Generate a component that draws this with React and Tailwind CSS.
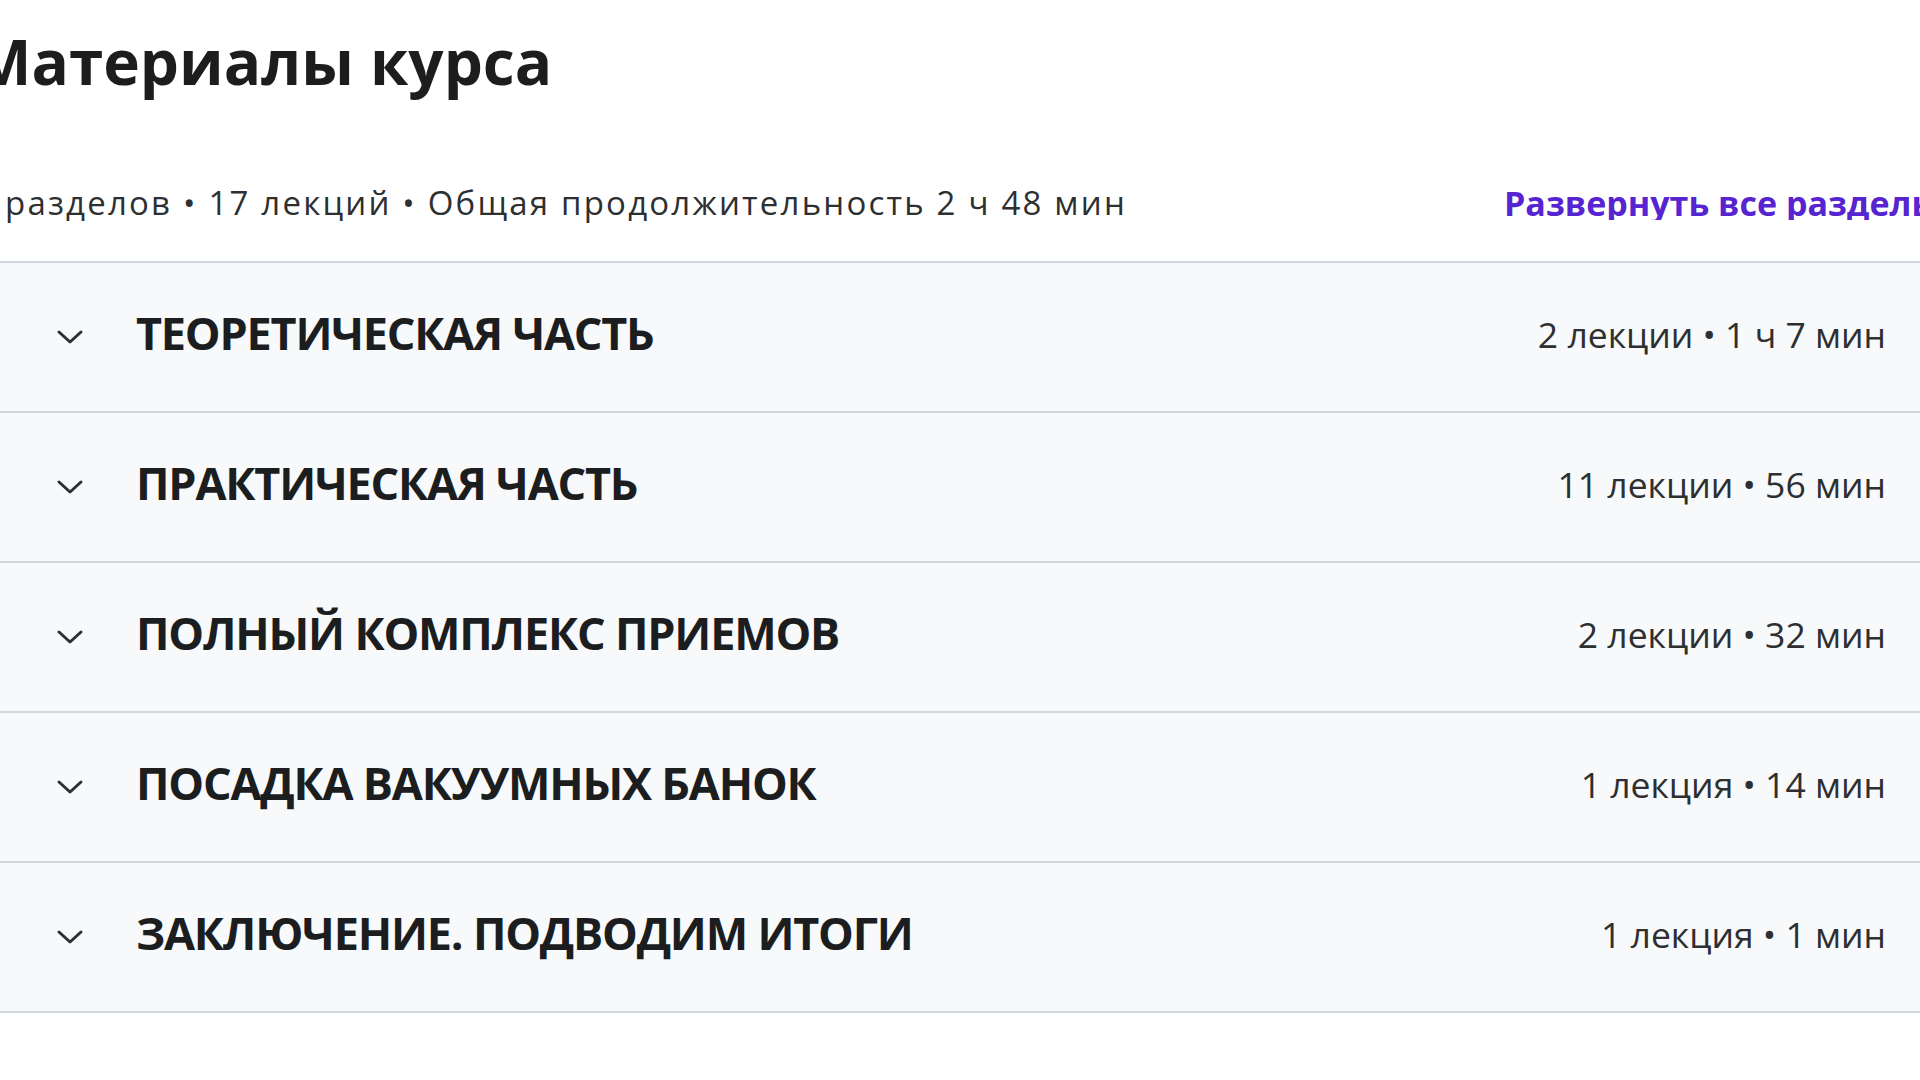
import React from "react";

const sections = [
  { title: "ТЕОРЕТИЧЕСКАЯ ЧАСТЬ", meta: "2 лекции • 1 ч 7 мин" },
  { title: "ПРАКТИЧЕСКАЯ ЧАСТЬ", meta: "11 лекции • 56 мин" },
  { title: "ПОЛНЫЙ КОМПЛЕКС ПРИЕМОВ", meta: "2 лекции • 32 мин" },
  { title: "ПОСАДКА ВАКУУМНЫХ БАНОК", meta: "1 лекция • 14 мин" },
  { title: "ЗАКЛЮЧЕНИЕ. ПОДВОДИМ ИТОГИ", meta: "1 лекция • 1 мин" },
];

function Chevron() {
  return (
    <svg width="28" height="17" viewBox="0 0 28 17" fill="none" className="shrink-0">
      <polyline points="3,3 14,13 25,3" stroke="#2d2f31" strokeWidth="3" strokeLinecap="round" strokeLinejoin="round" />
    </svg>
  );
}

export default function App() {
  return (
    <div className="w-[1920px] h-[1080px] overflow-hidden bg-white font-['Open_Sans',sans-serif] text-[#2d2f31]">
      <div className="pt-[30px]">
        <h2 className="-ml-[27px] h-[62px] text-[62px] leading-none font-bold text-[#1c1d1f] whitespace-nowrap">
          Материалы курса
        </h2>

        <div className="mt-[80px] h-[60px] flex items-center justify-between pl-[5px]">
          <span className="text-[33px] leading-none tracking-[2.2px] text-[#2d2f31] whitespace-nowrap">
            разделов • 17 лекций • Общая продолжительность 2 ч 48 мин
          </span>
          <button className="mt-[2px] w-[416px] shrink-0 text-left text-[34px] leading-none font-bold text-[#5624d0] whitespace-nowrap overflow-hidden">
            Развернуть все разделы
          </button>
        </div>

        <div className="mt-[29px] border-b-2 border-[#d1d7dc]">
          {sections.map((s) => (
            <div
              key={s.title}
              className="h-[150px] border-t-2 border-[#d1d7dc] bg-[#f7f9fa] flex items-center pl-[56px] pr-[34px]"
            >
              <Chevron />
              <span className="ml-[52px] mb-[9px] text-[45px] leading-none font-bold tracking-[-1.2px] text-[#1c1d1f] whitespace-nowrap">
                {s.title}
              </span>
              <span className="ml-auto mb-[4px] text-[35.5px] leading-none text-[#2d2f31] whitespace-nowrap">{s.meta}</span>
            </div>
          ))}
        </div>
      </div>
    </div>
  );
}
